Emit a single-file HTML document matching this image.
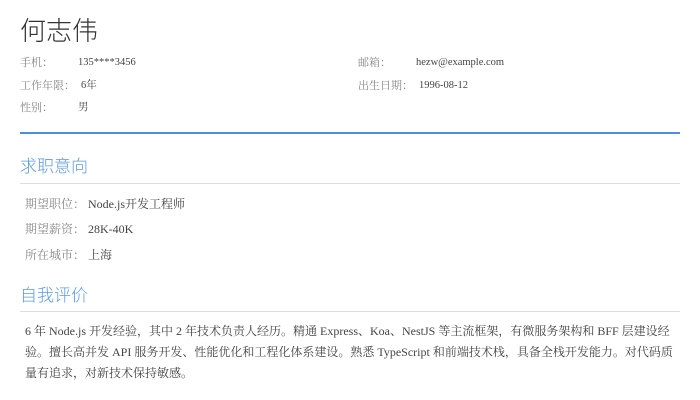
<!DOCTYPE html>
<html><head><meta charset="utf-8"><style>
body{margin:0;width:700px;height:400px;background:#fff;font-family:"Liberation Serif","Noto Serif CJK SC",serif;color:#333;position:relative;overflow:hidden}
.a{position:absolute;white-space:nowrap;line-height:1}
.n{left:20px;top:18px;font-size:26px;color:#333;font-family:"Liberation Sans","Noto Sans CJK SC",sans-serif;font-weight:300}
.l{font-size:11px;color:#888}
.v{font-size:10.5px;color:#444}
.h{font-size:17px;color:#5a9ae6;font-family:"Liberation Sans","Noto Sans CJK SC",sans-serif;font-weight:300}
.il{font-size:12px;color:#888}
.iv{font-size:12px;color:#444}
.p{font-size:12px;color:#444;line-height:1}
</style></head><body>
<div class="a n">何志伟</div>
<div class="a l" style="left:20px;top:58px">手机：</div><div class="a v" style="left:78px;top:58px">135****3456</div>
<div class="a l" style="left:358px;top:58px">邮箱：</div><div class="a v" style="left:416px;top:58px">hezw@example.com</div>
<div class="a l" style="left:20px;top:81px">工作年限：</div><div class="a v" style="left:81px;top:81px">6年</div>
<div class="a l" style="left:358px;top:81px">出生日期：</div><div class="a v" style="left:419px;top:81px">1996-08-12</div>
<div class="a l" style="left:20px;top:103px">性别：</div><div class="a v" style="left:78px;top:103px">男</div>
<div class="a" style="left:20px;top:132px;width:660px;height:2px;background:#4a90e2"></div>
<div class="a h" style="left:20px;top:158px">求职意向</div>
<div class="a" style="left:20px;top:183px;width:660px;height:1px;background:#ddd"></div>
<div class="a il" style="left:25px;top:198px">期望职位：</div><div class="a iv" style="left:88px;top:198px">Node.js开发工程师</div>
<div class="a il" style="left:25px;top:223px">期望薪资：</div><div class="a iv" style="left:88px;top:223px">28K-40K</div>
<div class="a il" style="left:25px;top:249px">所在城市：</div><div class="a iv" style="left:88px;top:249px">上海</div>
<div class="a h" style="left:20px;top:287px">自我评价</div>
<div class="a" style="left:20px;top:311px;width:660px;height:1px;background:#ddd"></div>
<div class="a p" style="left:25px;top:325px">6 年 Node.js 开发经验，其中 2 年技术负责人经历。精通 Express、Koa、NestJS 等主流框架，有微服务架构和 BFF 层建设经</div>
<div class="a p" style="left:25px;top:346px">验。擅长高并发 API 服务开发、性能优化和工程化体系建设。熟悉 TypeScript 和前端技术栈，具备全栈开发能力。对代码质</div>
<div class="a p" style="left:25px;top:367px">量有追求，对新技术保持敏感。</div>
</body></html>
